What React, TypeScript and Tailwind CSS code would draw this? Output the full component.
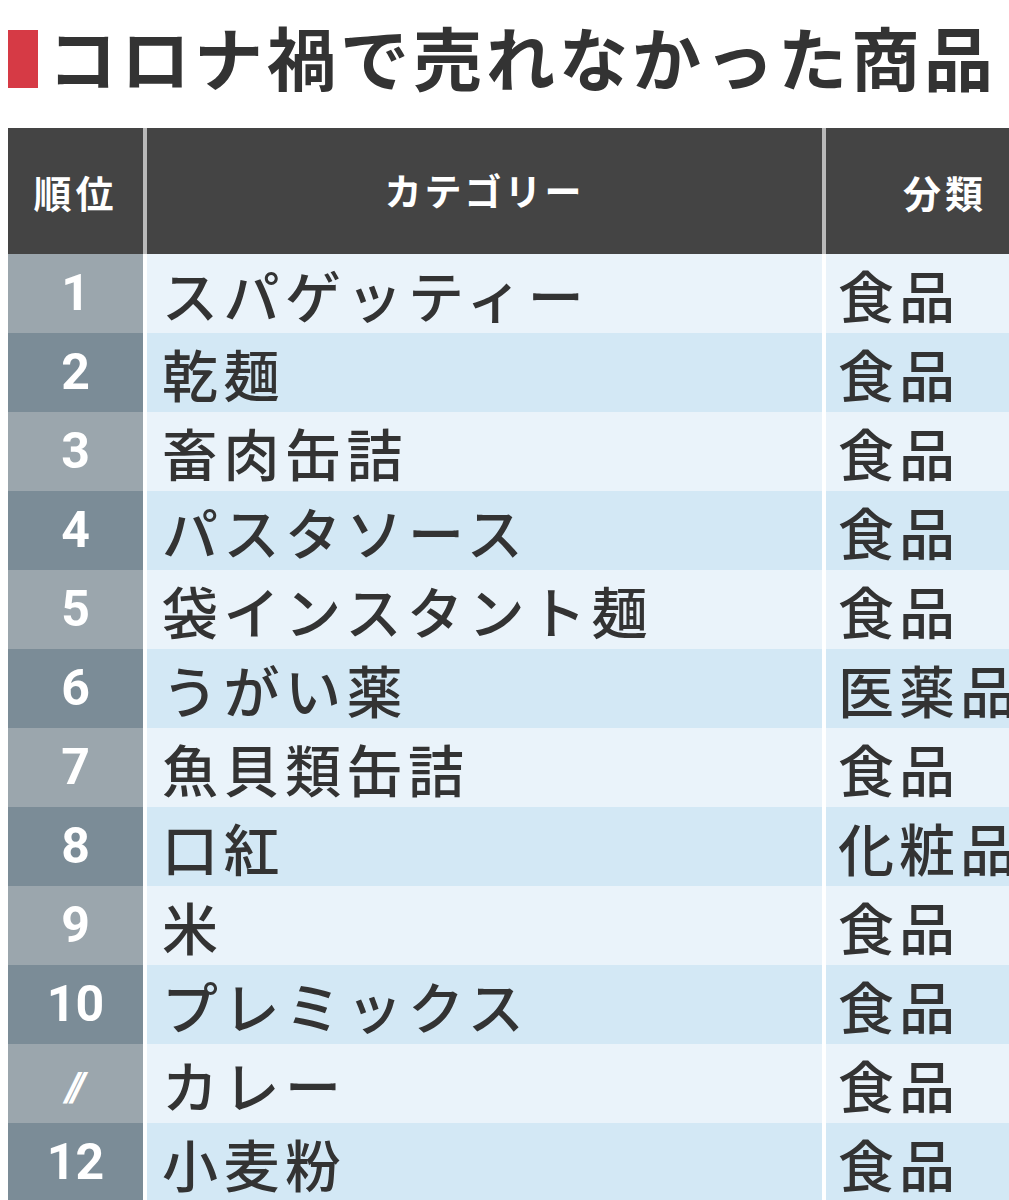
import React from 'react'

const font = { fontFamily: '"Noto Sans CJK JP", "Noto Sans", sans-serif' }

interface Item {
  rank: string
  name: string
  kind: string
}

const items: Item[] = [
  { rank: '1', name: 'スパゲッティー', kind: '食品' },
  { rank: '2', name: '乾麺', kind: '食品' },
  { rank: '3', name: '畜肉缶詰', kind: '食品' },
  { rank: '4', name: 'パスタソース', kind: '食品' },
  { rank: '5', name: '袋インスタント麺', kind: '食品' },
  { rank: '6', name: 'うがい薬', kind: '医薬品' },
  { rank: '7', name: '魚貝類缶詰', kind: '食品' },
  { rank: '8', name: '口紅', kind: '化粧品' },
  { rank: '9', name: '米', kind: '食品' },
  { rank: '10', name: 'プレミックス', kind: '食品' },
  { rank: '//', name: 'カレー', kind: '食品' },
  { rank: '12', name: '小麦粉', kind: '食品' },
]

export default function App() {
  return (
    <div className="w-[1009px] h-[1200px] overflow-hidden bg-white" style={font}>
      {/* Title */}
      <div className="flex items-center h-[120px] pl-2 pb-[2px]">
        <div className="w-[30px] h-[58px] bg-[#d63a45] shrink-0" />
        <h1 className="ml-[10px] -mt-[6px] text-[69px] leading-none font-bold text-[#333333] tracking-[4px] whitespace-nowrap">
          コロナ禍で売れなかった商品
        </h1>
      </div>

      {/* Table */}
      <div className="pl-2 pt-2">
        <div className="flex h-[126px] bg-[#444444] text-white font-bold w-[1056px]">
          <div className="w-[135px] flex items-center justify-center text-[38px] tracking-[4px]">順位</div>
          <div className="w-[679px] border-l-[4px] border-[#b9b9b9] flex items-center justify-center text-[37px] tracking-[3px]">
            カテゴリー
          </div>
          <div className="w-[242px] border-l-[4px] border-[#b9b9b9] flex items-center justify-center text-[38px] tracking-[4px]">
            分類
          </div>
        </div>

        {items.map((it, i) => {
          const even = i % 2 === 1
          return (
            <div key={i} className="flex h-[79px] w-[1056px]">
              <div
                className={`w-[135px] flex items-center justify-center text-white font-bold text-[50px] ${
                  even ? 'bg-[#7b8c97]' : 'bg-[#9ba6ad]'
                }`}
                style={{ fontFamily: 'Roboto, "Noto Sans", sans-serif' }}
              >
                {it.rank === '//' ? <span className="italic text-[40px] tracking-[-4px] mt-[8px] pr-1">//</span> : it.rank}
              </div>
              <div
                className={`w-[679px] border-l-[4px] border-white flex items-center pl-[15px] text-[56px] font-medium text-[#333333] tracking-[5.5px] ${
                  even ? 'bg-[#d3e8f5]' : 'bg-[#eaf3fa]'
                }`}
              >
                {it.name}
              </div>
              <div
                className={`w-[242px] border-l-[4px] border-white flex items-center pl-[12px] text-[56px] font-medium text-[#333333] tracking-[5px] whitespace-nowrap ${
                  even ? 'bg-[#d3e8f5]' : 'bg-[#eaf3fa]'
                }`}
              >
                {it.kind}
              </div>
            </div>
          )
        })}
      </div>
    </div>
  )
}
